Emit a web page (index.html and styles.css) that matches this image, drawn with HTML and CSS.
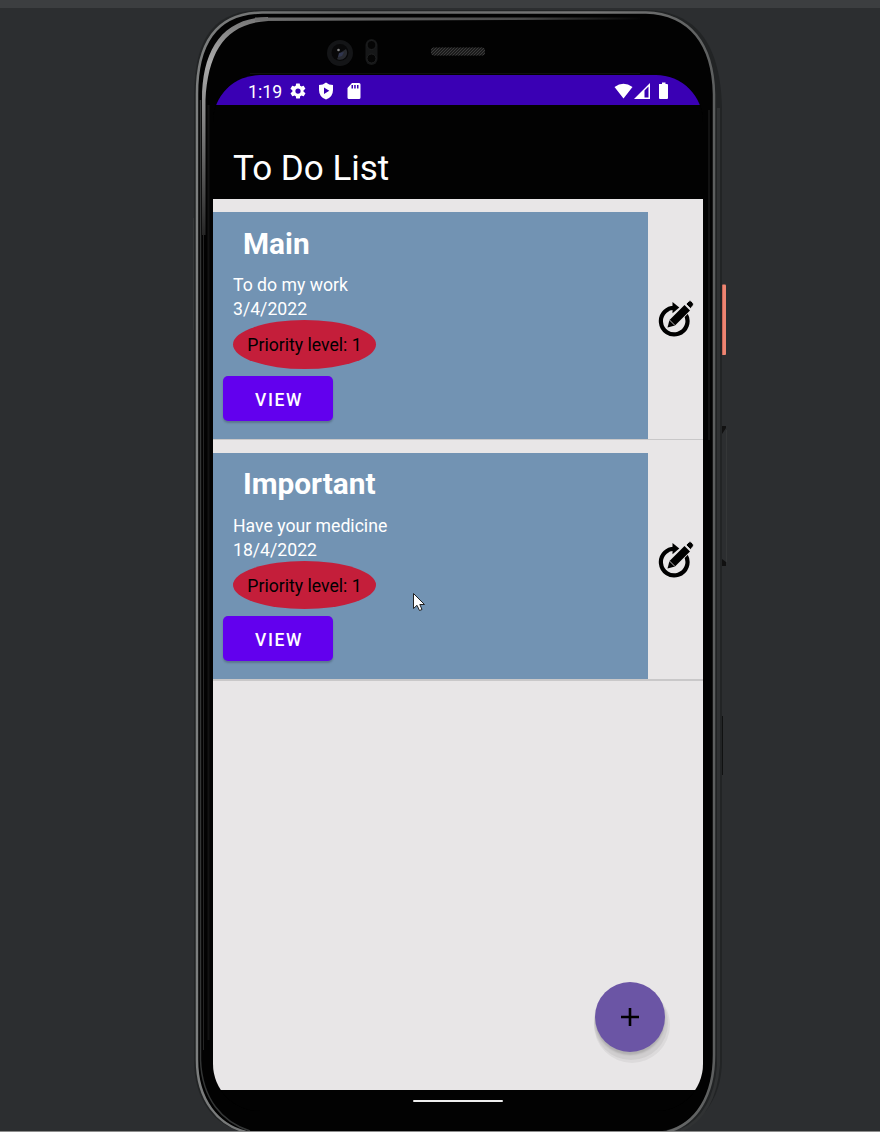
FILE: index.html
```html
<!DOCTYPE html>
<html lang="en">
<head>
<meta charset="utf-8">
<title>To Do List</title>
<link rel="stylesheet" href="styles.css">
</head>
<body>
<div class="desktop">
  <svg class="device" width="880" height="1132" viewBox="0 0 880 1132" fill="none">
    <defs>
      <linearGradient id="rim" x1="196" y1="0" x2="720" y2="0" gradientUnits="userSpaceOnUse">
        <stop offset="0" stop-color="#7c7e7e"/><stop offset=".3" stop-color="#656666"/><stop offset=".75" stop-color="#777"/><stop offset="1" stop-color="#5c5e5e"/>
      </linearGradient>
      <linearGradient id="shine" x1="0" y1="18" x2="0" y2="240" gradientUnits="userSpaceOnUse">
        <stop offset="0" stop-color="#777"/><stop offset=".2" stop-color="#aaa"/><stop offset=".45" stop-color="#858585"/><stop offset="1" stop-color="#222"/>
      </linearGradient>
      <linearGradient id="topshine" x1="255" y1="0" x2="640" y2="0" gradientUnits="userSpaceOnUse">
        <stop offset="0" stop-color="#707070"/><stop offset=".7" stop-color="#4a4a4a"/><stop offset="1" stop-color="#050505"/>
      </linearGradient>
      <pattern id="mesh" width="3" height="3" patternUnits="userSpaceOnUse"><path fill="#3c3c3c" d="M0 0h1v1H0zM2 1h1v1H2zM1 2h1v1H1z"/></pattern>
    </defs>
    <path fill="#222425" d="M194 100C194 42 210 11 260 10H648C695 12 721 42 722 110V1060C722 1100 700 1131 660 1132H244C214 1126 194 1100 194 1060Z"/>
    <path fill="#020202" d="M197 94C197 44 216 13 262 12.500H646C690 14 713 44 714 94V1055C714 1095 695 1131 652 1132H252C216 1128 197 1094 197 1058Z"/>
    <path stroke="url(#rim)" stroke-width="2.500" d="M246 1132C218 1125 197 1100 197 1060V94C197 44 216 13 262 12.500H646C690 14 713 44 714 94V1055C714 1095 697 1124 667 1132"/>
    <path stroke="#343636" stroke-width="1.500" d="M200.500 100V1060C202 1099 222 1122 250 1131"/>
    <path stroke="#303233" stroke-width="3" d="M718.500 108V1065C716 1100 701 1121 681 1131"/>
    <path fill="url(#shine)" d="M202 235V100C202 50 222 18 268 17V21C226 23 208 51 205.500 100V235Z"/>
    <path stroke="#242424" d="M203.500 235V1050"/>
    <path fill="url(#topshine)" d="M255 17.500H640V19.500L255 21Z"/>
    <path stroke="#121212" stroke-width="2" d="M208.500 105V1040M709 110V440"/>
    <circle cx="340" cy="53" r="13" fill="#141517"/>
    <circle cx="340" cy="52.500" r="8.500" fill="#080809"/>
    <path fill="#282a30" d="M346 49a7 7 0 0 1-9 10l3-6z"/>
    <path fill="#30364f" d="M339 53l5-1-2 4-4 1z"/>
    <circle cx="338.500" cy="50" r="1.300" fill="#888"/>
    <rect x="365.500" y="39" width="12" height="26" rx="6" fill="#161718"/>
    <circle cx="371.500" cy="45" r="4.500" fill="#050505" stroke="#202122"/>
    <circle cx="371.500" cy="58.500" r="4.500" fill="#050505" stroke="#202122"/>
    <rect x="431" y="47.500" width="54" height="8" rx="3" fill="#1b1b1b"/>
    <rect x="431" y="47.500" width="54" height="8" rx="3" fill="url(#mesh)"/>
    <path stroke="#101010" d="M250 73.500H640"/>
    <rect x="722" y="284.500" width="4" height="70.500" rx="1" fill="#ee8572"/>
    <path stroke="#c76858" d="M722.500 285V354"/>
    <path stroke="#353738" d="M726.500 430V562M193.500 218V330"/>
    <path stroke="#101111" d="M722.500 716V775"/>
    <path fill="#111" d="M722 426h4v2l-4 6zM722 559l4 3v4h-4z"/>
    <path stroke="#8c8c8c" d="M0 1131.500H880"/>
  </svg>

  <main class="screen">
    <header class="status">
      <span class="clock">1:19</span>
      <svg class="gear" width="18" height="18" viewBox="0 0 24 24"><path fill="#fff" fill-rule="evenodd" d="M19.400 13a7.500 7.500 0 0 0 0-2l2.200-1.700a.5.5 0 0 0 .1-.7l-2-3.400a.5.5 0 0 0-.6-.2l-2.600 1a8 8 0 0 0-1.700-1l-.4-2.600a.5.5 0 0 0-.5-.4h-4a.5.5 0 0 0-.5.4L9 5a8 8 0 0 0-1.700 1l-2.600-1a.5.5 0 0 0-.6.200l-2 3.400a.5.5 0 0 0 .1.700L4.500 11a8 8 0 0 0 0 2l-2.200 1.700a.5.5 0 0 0-.1.700l2 3.400c.1.200.4.300.6.200l2.600-1a8 8 0 0 0 1.700 1l.4 2.600c0 .2.200.4.500.4h4c.3 0 .5-.2.500-.4l.4-2.600a8 8 0 0 0 1.700-1l2.600 1c.2.100.5 0 .6-.2l2-3.400a.5.5 0 0 0-.1-.7zM12 15.500a3.500 3.500 0 1 1 0-7 3.500 3.500 0 0 1 0 7z"/></svg>
      <svg class="shield" width="16" height="18" viewBox="0 0 16 18"><path fill="#fff" fill-rule="evenodd" d="M8 .5Q11 3 15 3V8Q15 15 8 17.500Q1 15 1 8V3Q5 3 8 .5ZM6 5.500V12L11.300 8.700Z"/></svg>
      <svg class="card-icon" width="14" height="18" viewBox="0 0 14 18"><path fill="#fff" fill-rule="evenodd" d="M5 1H12Q13.500 1 13.500 2.500V15.500Q13.500 17 12 17H2Q.5 17 .5 15.500V6ZM4.500 3V6.500H6V3ZM7.200 3V6.500H8.700V3ZM10 3V6.500H11.500V3Z"/></svg>
      <svg class="signals" width="56" height="18" viewBox="0 0 56 18"><path fill="#fff" fill-rule="evenodd" d="M.5 5Q9.500-1.500 18.500 5L9.500 16.500ZM20 17 36 1V17ZM30.500 8.500V15.500H34.500V4.500ZM45 2H48V.5H51.500V2H53Q54 2 54 3V16Q54 17 53 17H46Q45 17 45 16Z"/></svg>
    </header>
    <h1 class="title">To Do List</h1>

    <section class="list">
      <article class="row">
        <div class="task">
          <h2>Main</h2>
          <p>To do my work</p>
          <p>3/4/2022</p>
          <span class="priority">Priority level: 1</span>
          <button class="view">VIEW</button>
        </div>
        <div class="edit">
          <svg width="36" height="38" viewBox="0 0 36 38"><path d="M27.200 13.600A13.300 13.300 0 1 1 17 7.800" fill="none" stroke="#000" stroke-width="4.200" transform="rotate(4 16 21)"/><path d="M14.500 2 21.300 7.600 14.500 13.300Z"/><path stroke="#e8e6e7" stroke-width="1.600" paint-order="stroke" d="M9.500 27.500 11.500 20 26.500 5 32 10.500 17 25.500Z"/><path stroke="#e8e6e7" stroke-width=".8" d="M11.500 20 17 25.500M28 4 31 1Q32 0 33.500 1.500L35 3Q36 4 35 5.500L32.500 8.500Z"/></svg>
        </div>
      </article>
      <article class="row">
        <div class="task">
          <h2>Important</h2>
          <p>Have your medicine</p>
          <p>18/4/2022</p>
          <span class="priority">Priority level: 1</span>
          <button class="view">VIEW</button>
        </div>
        <div class="edit">
          <svg width="36" height="38" viewBox="0 0 36 38"><path d="M27.200 13.600A13.300 13.300 0 1 1 17 7.800" fill="none" stroke="#000" stroke-width="4.200" transform="rotate(4 16 21)"/><path d="M14.500 2 21.300 7.600 14.500 13.300Z"/><path stroke="#e8e6e7" stroke-width="1.600" paint-order="stroke" d="M9.500 27.500 11.500 20 26.500 5 32 10.500 17 25.500Z"/><path stroke="#e8e6e7" stroke-width=".8" d="M11.500 20 17 25.500M28 4 31 1Q32 0 33.500 1.500L35 3Q36 4 35 5.500L32.500 8.500Z"/></svg>
        </div>
      </article>
    </section>

    <button class="fab" aria-label="Add"><svg width="18" height="18" viewBox="0 0 18 18"><path stroke="#000" stroke-width="2.600" d="M9 0V18M0 9H18"/></svg></button>
    <footer class="nav"><span class="pill"></span></footer>
  </main>

  <svg class="cursor" width="13" height="19" viewBox="0 0 13 19"><path fill="#fff" stroke="#222" d="M.5.5V15.500L4 12.300 6.500 17.500 9 16.500 6.800 11.500H11.500Z"/></svg>
</div>
</body>
</html>
```
FILE: styles.css
```css
* { box-sizing: border-box; }
body { margin: 0; background: #2c2e30; font-family: Roboto, sans-serif; }
.desktop {
  position: relative;
  width: 880px;
  height: 1132px;
  overflow: hidden;
  padding: 67px 177px 0 213px;
  border-top: 8px solid #3c3e40;
}
.device { position: absolute; left: 0; top: -8px; }
.screen {
  position: relative;
  display: flex;
  flex-direction: column;
  width: 490px;
  height: 1036px;
  border-radius: 47px;
  overflow: hidden;
  background: #020202;
}
.status {
  display: flex;
  align-items: center;
  flex: none;
  height: 30px;
  padding: 2px 33px 0 35px;
  background: #3a00b4;
  color: #fff;
}
.clock { width: 41px; font-size: 17.7px; line-height: 26px; padding-top: 1px; }
.shield { margin-left: 11px; }
.card-icon { margin-left: 13px; }
.signals { margin-left: auto; }
.title {
  flex: none;
  height: 94px;
  margin: 0;
  padding: 43px 20px 0;
  background: #020202;
  color: #fff;
  font-size: 35px;
  font-weight: 400;
  line-height: 42px;
}
.list { flex: 1; background: #e8e6e7; }
.row {
  display: flex;
  height: 241px;
  padding-top: 13px;
  border-bottom: 1px solid #c9c8c9;
}
.row + .row { height: 240px; border-bottom-width: 2px; margin-bottom: 0; }
.row + .row { height: 241px; }
.task {
  display: flex;
  flex-direction: column;
  align-items: flex-start;
  width: 435px;
  padding: 14px 0 0 20px;
  background: #7293b3;
  color: #fff;
}
.row + .row .task { padding-top: 13px; }
.row + .row h2 { margin-bottom: 12px; }
.row + .row .priority { height: 48px; }
.task h2 { margin: 0 0 11px 10px; font-size: 29.8px; line-height: 36px; font-weight: 700; }
.task p { margin: 0; font-size: 17.65px; line-height: 24px; }
.priority {
  width: 143px;
  height: 49px;
  margin-top: -1px;
  margin-bottom: 7px;
  border-radius: 50%;
  background: #c41e3a;
  color: #000;
  font-size: 17.65px;
  line-height: 51px;
  text-align: center;
}
.view {
  width: 110px;
  height: 45px;
  margin-left: -10px;
  padding: 2px 0 0 2px;
  border: 0;
  border-radius: 5px;
  background: #6200ee;
  color: #fff;
  font: 500 17.5px Roboto, sans-serif;
  letter-spacing: 1.6px;
  box-shadow: 0 2px 2px rgba(0, 0, 0, .2);
}
.edit { display: flex; flex: 1; justify-content: center; padding: 88px 0 0; }
.fab {
  position: absolute;
  left: 382px;
  top: 907px;
  display: flex;
  align-items: center;
  justify-content: center;
  width: 70px;
  height: 70px;
  padding: 0;
  border: 0;
  border-radius: 50%;
  background: #6b55a5;
  box-shadow: 0 3px 2px rgba(0, 0, 0, .15), 1px 6px 0 2px rgba(0, 0, 0, .05), 2px 8px 0 3px rgba(0, 0, 0, .05);
}
.nav {
  display: flex;
  justify-content: center;
  flex: none;
  height: 21px;
  padding-top: 10px;
  background: #020202;
}
.pill { width: 90px; height: 2px; border-radius: 1px; background: #eee; }
.cursor { position: absolute; left: 413px; top: 585px; }
```
